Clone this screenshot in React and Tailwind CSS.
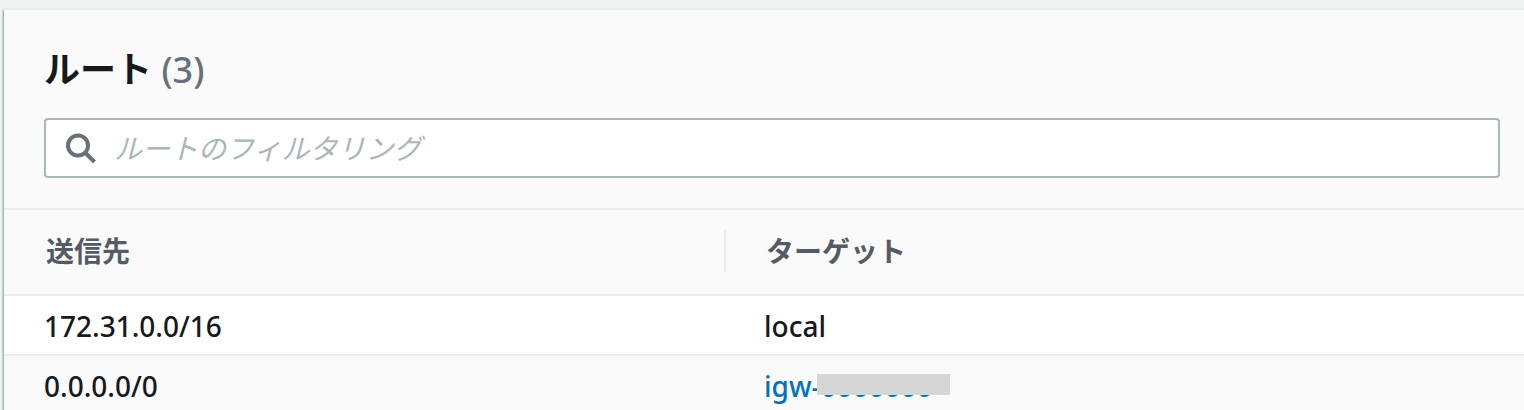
import React, { useState } from "react";

const routes = [
  { destination: "172.31.0.0/16", target: "local" },
  { destination: "0.0.0.0/0", target: "igw-", masked: "0000000" },
];

function SearchIcon() {
  return (
    <svg viewBox="0 0 32 32" className="h-8 w-8 shrink-0" fill="none" stroke="#687078" strokeWidth="4" aria-hidden="true">
      <circle cx="12" cy="13.500" r="10" />
      <path d="M19 20.500l9.500 9.500" />
    </svg>
  );
}

function RouteTarget({ route }) {
  if (!route.masked) {
    return route.target;
  }
  return (
    <a href="#gateway" className="flex text-[#0073bb]">
      {route.target}
      <span className="relative w-[133px]">
        {route.masked}
        <span className="absolute top-2 right-1 -left-1 h-[21px] bg-[#d6d6d6]" />
      </span>
    </a>
  );
}

export default function App() {
  const [filter, setFilter] = useState("");
  const rows = routes.filter((route) => (route.destination + route.target).includes(filter));

  return (
    <div className="h-screen overflow-hidden bg-[#f2f3f3] pt-2 pl-1 font-['Noto_Sans','Noto_Sans_CJK_JP',sans-serif] text-[28px] leading-10 text-[#16191f]">
      <section className="min-h-full border-t-2 border-[#eaeded] bg-[#fafafa] shadow-[-1px_2px_2px_#879596]">
        <header className="px-10 pt-9 pr-6 pb-[30px]">
          <h2 className="text-4xl leading-[48px] font-bold">
            ルート <span className="font-medium text-[#687078]">(3)</span>
          </h2>
          <label className="mt-6 flex h-[60px] items-center gap-4 rounded-sm border-2 border-[#aab7b8] bg-white px-5">
            <SearchIcon />
            <input
              type="text"
              value={filter}
              onChange={(e) => setFilter(e.target.value)}
              placeholder="ルートのフィルタリング"
              aria-label="ルートのフィルタリング"
              className="min-w-0 flex-1 bg-transparent outline-none placeholder:text-[#aab7b8] placeholder:italic"
            />
          </label>
        </header>

        <table className="w-full table-fixed border-separate border-spacing-0 text-left">
          <thead>
            <tr className="text-[#545b64]">
              <th className="w-[47.5%] border-y-2 border-[#eaeded] pt-5 pb-[22px] pl-10 font-bold">
                <div className="border-r-2 border-[#eaeded] py-px pl-0.5">送信先</div>
              </th>
              <th className="border-y-2 border-[#eaeded] pt-5 pb-[22px] pl-10 font-bold">
                <div className="py-px">ターゲット</div>
              </th>
            </tr>
          </thead>
          <tbody className="font-medium">
            {rows.map((route) => (
              <tr key={route.destination} className="odd:bg-white">
                <td className="h-[60px] border-b-2 border-[#eaeded] pt-0.5 pl-10">{route.destination}</td>
                <td className="h-[60px] border-b-2 border-[#eaeded] pt-0.5 pl-[38px]">
                  <RouteTarget route={route} />
                </td>
              </tr>
            ))}
          </tbody>
        </table>
      </section>
    </div>
  );
}
